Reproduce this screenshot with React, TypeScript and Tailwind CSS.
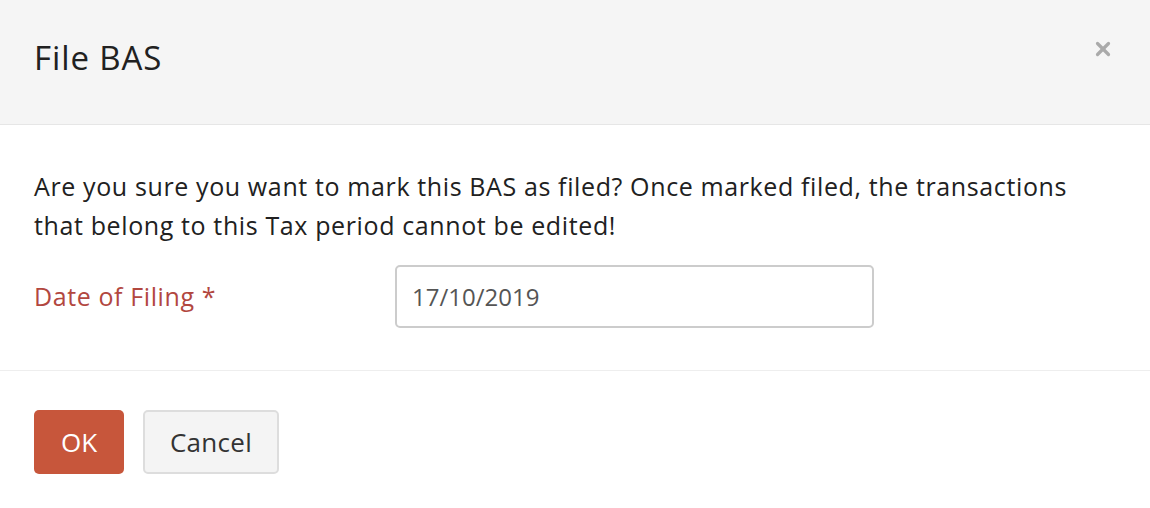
import { X } from "lucide-react";

export default function App() {
  return (
    <div className="w-[1150px] h-[508px] bg-white font-['Open_Sans',sans-serif] text-[#212121]">
      {/* Header */}
      <div className="h-[125px] bg-[#f5f5f5] border-b border-[#e6e6e6] flex items-start justify-between pl-[34px] pr-[36px]">
        <h2 className="mt-[37px] text-[33px] leading-[42px] font-normal tracking-[0.9px]">File BAS</h2>
        <button className="mt-[38px] text-[#aaaaaa]">
          <X className="h-[22px] w-[22px]" strokeWidth={3.5} />
        </button>
      </div>

      {/* Body */}
      <div className="h-[246px] border-b border-[#eeeeee] px-[34px] pt-[42px]">
        <p className="text-[25px] leading-[39px] tracking-[0.62px]">
          Are you sure you want to mark this BAS as filed? Once marked filed, the transactions
          <br />
          that belong to this Tax period cannot be edited!
        </p>
        <div className="mt-[20px] flex items-center">
          <label className="w-[361px] text-[25px] tracking-[0.6px] text-[#b2473f]">Date of Filing *</label>
          <input
            defaultValue="17/10/2019"
            className="w-[479px] h-[63px] border-2 border-[#cccccc] rounded-[5px] px-[15px] text-[24px] text-[#555555] outline-none"
          />
        </div>
      </div>

      {/* Footer */}
      <div className="px-[34px] pt-[39px] flex gap-[19px]">
        <button className="w-[90px] h-[64px] rounded-[5px] bg-[#c7563b] text-white text-[26px]">
          OK
        </button>
        <button className="w-[136px] h-[64px] rounded-[5px] bg-[#f4f4f4] border-2 border-[#dddddd] text-[26px] tracking-[0.3px] text-[#333333]">
          Cancel
        </button>
      </div>
    </div>
  );
}
